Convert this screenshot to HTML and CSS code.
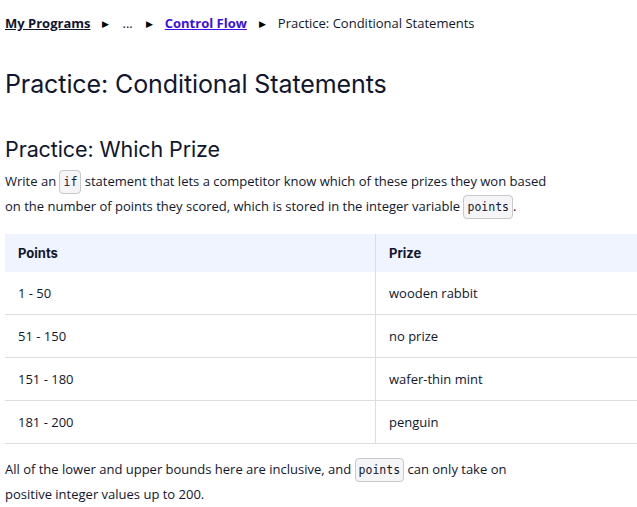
FILE: index.html
```html
<!DOCTYPE html>
<html>
<head>
<meta charset="utf-8">
<link rel="stylesheet" href="styles.css">
</head>
<body>
<div class="page">
  <nav class="crumbs">
    <a class="crumb-home" href="#">My Programs</a>
    <span class="sep">&#9654;</span>
    <span class="dots">...</span>
    <span class="sep">&#9654;</span>
    <a class="crumb-link" href="#">Control Flow</a>
    <span class="sep">&#9654;</span>
    <span class="current">Practice: Conditional Statements</span>
  </nav>
  <h1 class="title">Practice: Conditional Statements</h1>
  <h2 class="subtitle">Practice: Which Prize</h2>
  <p class="text">Write an <code class="code">if</code> statement that lets a competitor know which of these prizes they won based on the number of points they scored, which is stored in the integer variable <code class="code">points</code>.</p>
  <table class="prizes">
    <thead>
      <tr><th class="col1">Points</th><th>Prize</th></tr>
    </thead>
    <tbody>
      <tr><td class="col1">1 - 50</td><td>wooden rabbit</td></tr>
      <tr><td class="col1">51 - 150</td><td>no prize</td></tr>
      <tr><td class="col1">151 - 180</td><td>wafer-thin mint</td></tr>
      <tr><td class="col1">181 - 200</td><td>penguin</td></tr>
    </tbody>
  </table>
  <p class="text after">All of the lower and upper bounds here are inclusive, and <code class="code">points</code> can only take on positive integer values up to 200.</p>
</div>
</body>
</html>
```
FILE: styles.css
```css
html, body {
  margin: 0;
  padding: 0;
  background: #fff;
}
body {
  font-family: "Open Sans", sans-serif;
  color: #10162f;
  font-size: 13px;
}
.page {
  padding-left: 5px;
  width: 632px;
}
.crumbs {
  display: flex;
  align-items: center;
  height: 20px;
  margin-top: 13px;
  font-size: 13px;
}
.crumb-home {
  font-weight: 700;
  color: #10162f;
  text-decoration: underline;
}
.crumb-link {
  font-weight: 700;
  color: #3a10e5;
  text-decoration: underline;
}
.sep {
  font-size: 9px;
  margin: 0 12px 0 12px;
  color: #000;
}
.dots {
  font-size: 13px;
  margin: 0 1px;
}
.current {
  color: #10162f;
}
.title {
  font-family: "Inter", sans-serif;
  font-weight: 400;
  font-size: 25px;
  letter-spacing: -0.1px;
  margin: 36px 0 0 0;
  line-height: 30px;
}
.subtitle {
  font-family: "Inter", sans-serif;
  font-weight: 400;
  font-size: 21.5px;
  letter-spacing: -0.1px;
  margin: 37px 0 0 0;
  line-height: 26px;
}
.text {
  margin: 7px 0 0 0;
  line-height: 24px;
  width: 560px;
}
.code {
  font-family: "DejaVu Sans Mono", monospace;
  font-size: 11.5px;
  background: #f5f5f7;
  border: 1px solid #c9c9cc;
  border-radius: 4px;
  padding: 4px 3px;
}
.prizes {
  border-collapse: collapse;
  width: 632px;
  margin-top: 15px;
}
.prizes th {
  background: #f0f4fe;
  font-family: "Inter", sans-serif;
  font-weight: 700;
  font-size: 13px;
  text-align: left;
  height: 38px;
  padding: 0 13px;
}
.prizes td {
  height: 42px;
  padding: 0 13px;
  border-bottom: 1.5px solid #dddddf;
}
.prizes .col1 {
  width: 344px;
  border-right: 1.5px solid #dddddf;
}
.after {
  margin-top: 13px;
  width: 530px;
}
```
